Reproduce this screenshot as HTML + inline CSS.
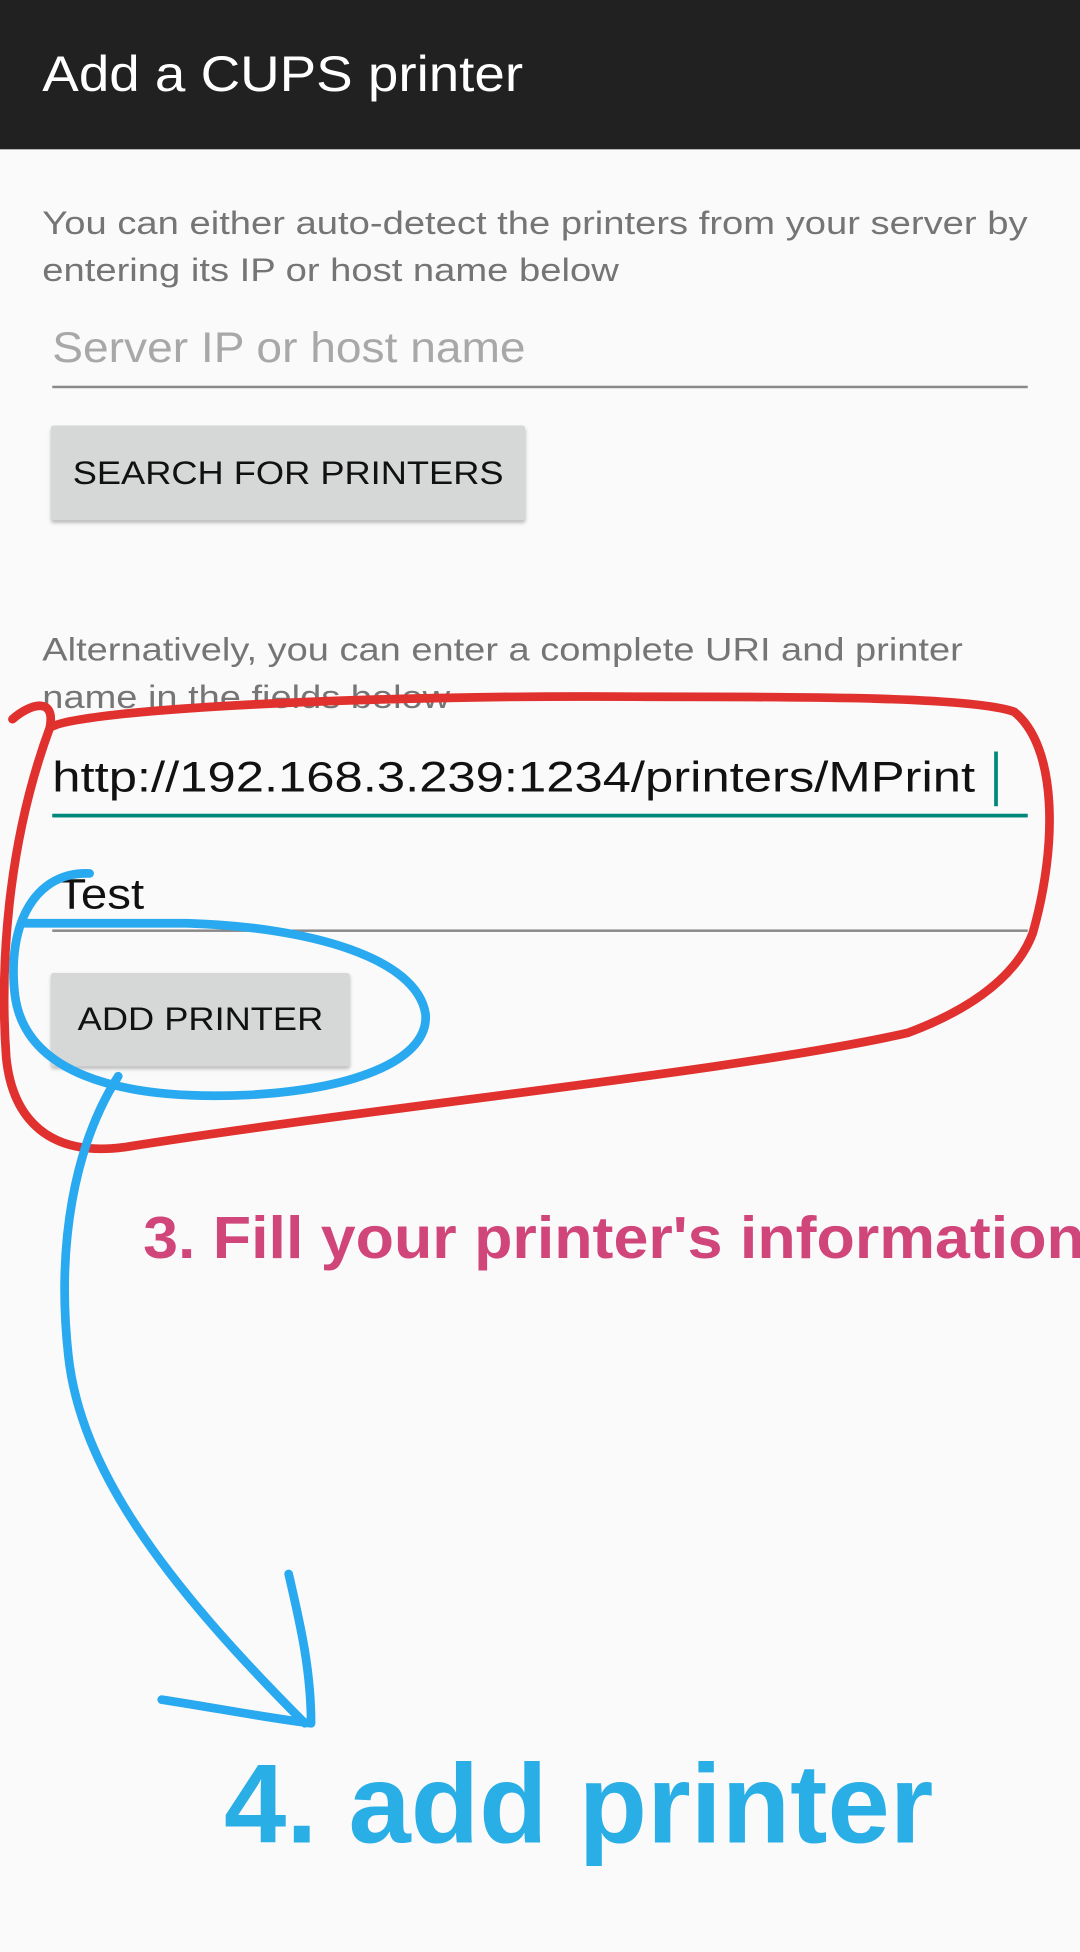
<!DOCTYPE html>
<html><head><meta charset="utf-8"><style>
html,body{margin:0;padding:0;background:#fafafa;}
body{width:1080px;height:1952px;overflow:hidden;position:relative;font-family:"Liberation Sans",sans-serif;}
#w{position:absolute;left:0;top:0;width:868px;height:1569px;transform:scale(1.24424);transform-origin:0 0;overflow:hidden;}
.a{position:absolute;white-space:nowrap;transform-origin:0 0;}
.hdr{position:absolute;left:0;top:0;width:868px;height:120px;background:#212121;}
.btn{position:absolute;background:#d6d7d7;box-shadow:0 2px 3px rgba(0,0,0,.25);border-radius:2px;font-size:26px;color:#111;display:flex;align-items:center;justify-content:center;}
.btn span{display:inline-block;transform:scaleX(1.12);}
.line{position:absolute;height:2px;background:#8a8a8a;}
</style></head><body><div id="w">
<div class="hdr"></div>
<div class="a" style="left:34px;top:38px;font-size:40px;color:#fff;transform:scaleX(1.1);">Add a CUPS printer</div>
<div class="a" style="left:34px;top:160px;font-size:26px;line-height:38px;color:#757575;transform:scaleX(1.18);">You can either auto-detect the printers from your server by<br>entering its IP or host name below</div>
<div class="a" style="left:42px;top:261px;font-size:34px;color:#a8a8a8;transform:scaleX(1.09);">Server IP or host name</div>
<div class="line" style="left:42px;top:310px;width:784px;"></div>
<div class="btn" style="left:41px;top:342px;width:381px;height:76px;"><span>SEARCH FOR PRINTERS</span></div>
<div class="a" style="left:34px;top:503px;font-size:26px;line-height:38px;color:#757575;transform:scaleX(1.175);">Alternatively, you can enter a complete URI and printer<br>name in the fields below</div>
<div class="a" style="left:42px;top:606px;font-size:34px;color:#111;transform:scaleX(1.2);">http://192.168.3.239:1234/printers/MPrint</div>
<div style="position:absolute;left:799px;top:604px;width:3px;height:44px;background:#00897b;"></div>
<div style="position:absolute;left:42px;top:654px;width:784px;height:3px;background:#00897b;"></div>
<div class="a" style="left:46px;top:700px;font-size:34px;color:#111;transform:scaleX(1.12);">Test</div>
<div class="line" style="left:42px;top:747px;width:784px;"></div>
<div class="btn" style="left:41px;top:782px;width:240px;height:75px;"><span>ADD PRINTER</span></div>
<div class="a" style="left:115px;top:968px;font-size:48px;font-weight:600;color:#d0457a;transform:scaleX(1.05);">3. Fill your printer's information</div>
<div class="a" style="left:180px;top:1400px;font-size:90px;font-weight:bold;color:#2aaee6;">4. add printer</div>
<svg style="position:absolute;left:0;top:0" width="868" height="1569" fill="none" stroke-linecap="round" stroke-linejoin="round">
<path d="M10,578 C25,565 45,560 40,585 C60,570 300,558 520,560 C650,560 780,560 815,572 C850,600 850,680 830,750 C815,790 770,815 730,830 C600,860 300,890 100,922 C40,930 10,900 5,850 C0,780 5,680 40,585" stroke="#e0312e" stroke-width="7"/>
<path d="M72,702 C30,700 5,740 12,800 C20,860 90,885 200,880 C290,875 345,850 342,815 C335,770 250,745 150,742 L20,742" stroke="#29a9ef" stroke-width="7"/>
<path d="M95,865 C60,920 45,1000 55,1090 C65,1180 130,1270 245,1385" stroke="#29a9ef" stroke-width="7"/>
<path d="M130,1366 C170,1372 210,1380 250,1385 C250,1340 240,1300 232,1265" stroke="#29a9ef" stroke-width="7"/>
</svg>
</div></body></html>
